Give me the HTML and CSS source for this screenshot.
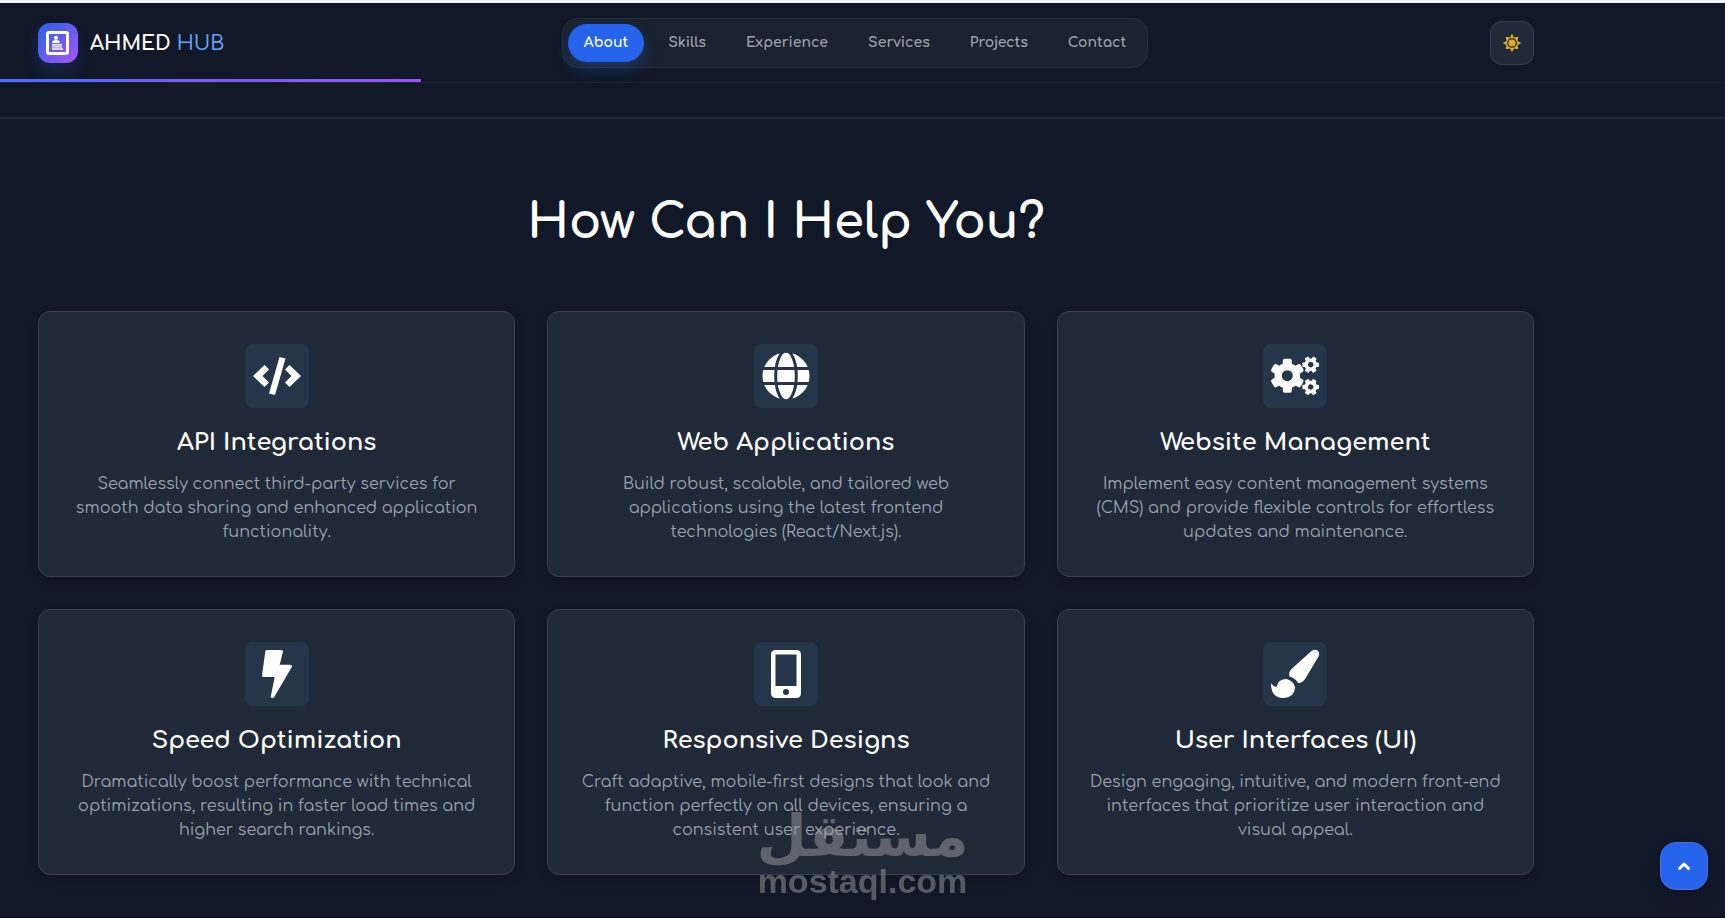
FILE: index.html
```html
<!DOCTYPE html>
<html lang="en">

<head>
    <meta charset="UTF-8">
    <title>Ahmed Hub</title>
    <link rel="stylesheet" href="styles.css">
</head>

<body>
    <header class="header">
        <div class="container header-row">
            <a href="#" class="logo">
                <span class="logo-icon">
                    <svg viewBox="0 0 24 24" width="24" height="24" fill="#fff">
                        <rect x="1.5" y="1.5" width="20" height="21" rx="1.5" fill="none" stroke="#fff" stroke-width="3" />
                        <circle cx="10" cy="6.8" r="2.1" />
                        <path d="M6 12c0-2 1.5-3 4-3s4 1 4 3z" />
                        <path d="M6 13h10v1.5H6zM6 15.3h10v1.2H6zM6 17.2h11v1.5H6z" />
                    </svg>
                </span>
                <span class="logo-text">AHMED <span class="logo-accent">HUB</span></span>
            </a>
            <nav class="nav">
                <a href="#about" class="nav-link active">About</a>
                <a href="#skills" class="nav-link">Skills</a>
                <a href="#experience" class="nav-link">Experience</a>
                <a href="#services" class="nav-link">Services</a>
                <a href="#projects" class="nav-link">Projects</a>
                <a href="#contact" class="nav-link">Contact</a>
            </nav>
            <button class="theme-btn" aria-label="Toggle theme">
                <svg viewBox="-10 -10 20 20" width="20" height="20" fill="#e0a92e">
                    <path d="M0-9.3 2-5.6 6.3-6.3 5.6-2 9.3 0 5.6 2 6.3 6.3 2 5.6 0 9.3-2 5.6-6.3 6.3-5.6 2-9.3 0-5.6-2-6.3-6.3-2-5.6z" />
                    <circle r="4.3" stroke="#3a3729" stroke-width="1.5" />
                </svg>
            </button>
        </div>
        <div class="progress"></div>
    </header>

    <main>
        <div class="divider"></div>
        <section class="services" id="services">
            <div class="container">
                <h1>How Can I Help You?</h1>
                <div class="grid">
                    <article class="card">
                        <svg class="card-icon" viewBox="0 0 64 64">
                            <path d="M8 32 19.5 21 24 25.5 17.5 32 24 38.5 19.5 43zM56 32 44.5 21 40 25.5 46.5 32 40 38.5 44.5 43zM34.5 13 40.5 14.5 30 51 24 49.5z" />
                        </svg>
                        <h2>API Integrations</h2>
                        <p>Seamlessly connect third-party services for smooth data sharing and enhanced application functionality.</p>
                    </article>
                    <article class="card">
                        <svg class="card-icon" viewBox="0 0 64 64">
                            <circle cx="32" cy="32" r="23.5" />
                            <g class="cut-line">
                                <ellipse cx="32" cy="32" rx="10.3" ry="25" />
                                <path d="M7 24.5h50M7 39.5h50" />
                            </g>
                        </svg>
                        <h2>Web Applications</h2>
                        <p>Build robust, scalable, and tailored web applications using the latest frontend technologies (React/Next.js).</p>
                    </article>
                    <article class="card">
                        <svg class="card-icon" viewBox="0 0 64 64">
                            <defs>
                                <g id="gear">
                                    <circle r="12.8" />
                                    <rect id="tooth" x="-4.5" y="-17" width="9" height="34" rx="2" />
                                    <use href="#tooth" transform="rotate(60)" />
                                    <use href="#tooth" transform="rotate(120)" />
                                    <circle class="cut" r="5.5" />
                                </g>
                            </defs>
                            <use href="#gear" transform="translate(24.3 31.7)" />
                            <use href="#gear" transform="translate(47.7 20.7) rotate(30) scale(.49)" />
                            <use href="#gear" transform="translate(47.7 43) rotate(30) scale(.49)" />
                        </svg>
                        <h2>Website Management</h2>
                        <p>Implement easy content management systems (CMS) and provide flexible controls for effortless updates and maintenance.</p>
                    </article>
                    <article class="card">
                        <svg class="card-icon" viewBox="0 0 64 64">
                            <path stroke="#fff" stroke-width="3" stroke-linejoin="round" d="M21.8 9.5H36.5L32.8 24.2H45.5L27.8 54.5H27.3L31.5 33.5H18.5z" />
                        </svg>
                        <h2>Speed Optimization</h2>
                        <p>Dramatically boost performance with technical optimizations, resulting in faster load times and higher search rankings.</p>
                    </article>
                    <article class="card">
                        <svg class="card-icon" viewBox="0 0 64 64">
                            <rect x="17" y="8" width="30" height="48" rx="4.5" />
                            <rect class="cut" x="21.5" y="12.5" width="21" height="31.5" />
                            <circle class="cut" cx="32" cy="50" r="3" />
                        </svg>
                        <h2>Responsive Designs</h2>
                        <p>Craft adaptive, mobile-first designs that look and function perfectly on all devices, ensuring a consistent user experience.</p>
                    </article>
                    <article class="card">
                        <svg class="card-icon" viewBox="0 0 64 64">
                            <path d="M48.5 9C53 5.5 58 9.5 55.5 14.5L43 35.5C40.5 39.5 38.5 41 35 41 33.5 38 30.5 35.5 26.5 34.5 25.5 31 26.5 29 29 26.5z" />
                            <path d="M8 41.3C9.5 43.5 12.5 45.5 14 44.5 14.5 40 18 37 23.5 37 28 38.5 31 41 32 45 32 52 27 56 20 56 12 56 8 51 8 41.3z" />
                        </svg>
                        <h2>User Interfaces (UI)</h2>
                        <p>Design engaging, intuitive, and modern front-end interfaces that prioritize user interaction and visual appeal.</p>
                    </article>
                </div>
            </div>
        </section>
    </main>

    <div class="watermark">
        <span class="watermark-ar" lang="ar">مستقل</span>
        <span class="watermark-en">mostaql.com</span>
    </div>

    <button class="top-btn" aria-label="Back to top">
        <svg viewBox="0 0 16 16" width="16" height="16" fill="none" stroke="#fff" stroke-width="3" stroke-linecap="round" stroke-linejoin="round">
            <path d="M3.5 10.5 8 6l4.5 4.5" />
        </svg>
    </button>
</body>

</html>
```
FILE: styles.css
```css
* {
    box-sizing: border-box;
}

body {
    margin: 0;
    border-top: 3px solid #f3f4f6;
    background-color: #111827;
    color: white;
    font-family: Comfortaa, Inter, sans-serif;
}

a {
    text-decoration: none;
}

h1, h2, p {
    margin: 0;
}

.container {
    max-width: 1572px;
    padding: 0 38px;
}

.header {
    height: 80px;
    position: relative;
    border-bottom: 1px solid #1b2433;
}

.header-row {
    display: grid;
    grid-template-columns: 1fr auto 1fr;
    align-items: center;
    height: 80px;
}

.logo {
    display: flex;
    align-items: center;
    gap: 12px;
    color: white;
    font-size: 20px;
    font-weight: 700;
}

.logo-icon {
    display: flex;
    align-items: center;
    justify-content: center;
    width: 40px;
    height: 40px;
    border-radius: 12px;
    background: linear-gradient(135deg, #2563eb, #a855f7);
    box-shadow: 0 8px 16px rgba(37, 99, 235, 0.2);
}

.logo-accent {
    color: #60a5fa;
    font-weight: 500;
}

.nav {
    display: flex;
    gap: 8px;
    padding: 5px;
    margin-left: 138px;
    border: 1px solid #27313e;
    border-radius: 16px;
    background-color: #1a222f;
}

.nav-link {
    padding: 0 16px;
    border-radius: 19px;
    color: #9ca3af;
    font-size: 14px;
    font-weight: 700;
    line-height: 38px;
}

.nav-link.active {
    background-color: #2563eb;
    color: white;
    box-shadow: 0 8px 16px rgba(37, 99, 235, 0.25);
}

.theme-btn {
    display: flex;
    align-items: center;
    justify-content: center;
    justify-self: end;
    width: 44px;
    height: 44px;
    padding: 0;
    border: 1px solid #374151;
    border-radius: 12px;
    background-color: #1f2937;
    cursor: pointer;
}

.progress {
    position: absolute;
    left: 0;
    bottom: 0;
    width: 24.4%;
    height: 3px;
    background: linear-gradient(to right, #4c6ef5, #7c5cf6 50%, #9a55f7);
}

.divider {
    height: 36px;
    border-bottom: 2px solid #1f2733;
}

.services {
    padding: 68px 0 41px;
    border-bottom: 2px solid #0b101b;
}

.services h1 {
    margin-bottom: 52px;
    font-size: 48px;
    font-weight: 700;
    line-height: 72px;
    text-align: center;
}

.grid {
    display: grid;
    grid-template-columns: repeat(3, 1fr);
    gap: 32px;
}

.card {
    display: flex;
    flex-direction: column;
    align-items: center;
    padding: 32px;
    border: 1px solid #374151;
    border-radius: 12px;
    background-color: #1f2937;
    box-shadow: 0 4px 12px rgba(0, 0, 0, 0.15);
    text-align: center;
}

.card-icon {
    width: 64px;
    height: 64px;
    margin-bottom: 17px;
    border-radius: 8px;
    background-color: #25364b;
    fill: white;
}

.cut {
    fill: #25364b;
}

.cut-line {
    fill: none;
    stroke: #25364b;
    stroke-width: 3;
}

.card h2 {
    margin-bottom: 11px;
    font-size: 24px;
    font-weight: 700;
    line-height: 36px;
}

.card p {
    color: #9ca3af;
    font-size: 16px;
    line-height: 24px;
}

/* stamp over the page */
.watermark {
    position: fixed;
    left: 50%;
    bottom: 20px;
    display: flex;
    flex-direction: column;
    align-items: center;
    transform: translateX(-50%);
    color: #a0a0a0;
    font-weight: bold;
    opacity: 0.5;
    pointer-events: none;
}

.watermark-ar {
    font-family: "DejaVu Sans", sans-serif;
    font-size: 58px;
    line-height: 56px;
}

.watermark-en {
    font-family: "Liberation Sans", Arial, sans-serif;
    font-size: 34px;
    line-height: 34px;
}

.top-btn {
    position: fixed;
    right: 17px;
    bottom: 28px;
    display: flex;
    align-items: center;
    justify-content: center;
    width: 48px;
    height: 48px;
    padding: 0;
    border: 1px solid #4f6bf0;
    border-radius: 16px;
    background-color: #2563eb;
    box-shadow: 0 8px 16px rgba(0, 0, 0, 0.15);
    cursor: pointer;
}
```
